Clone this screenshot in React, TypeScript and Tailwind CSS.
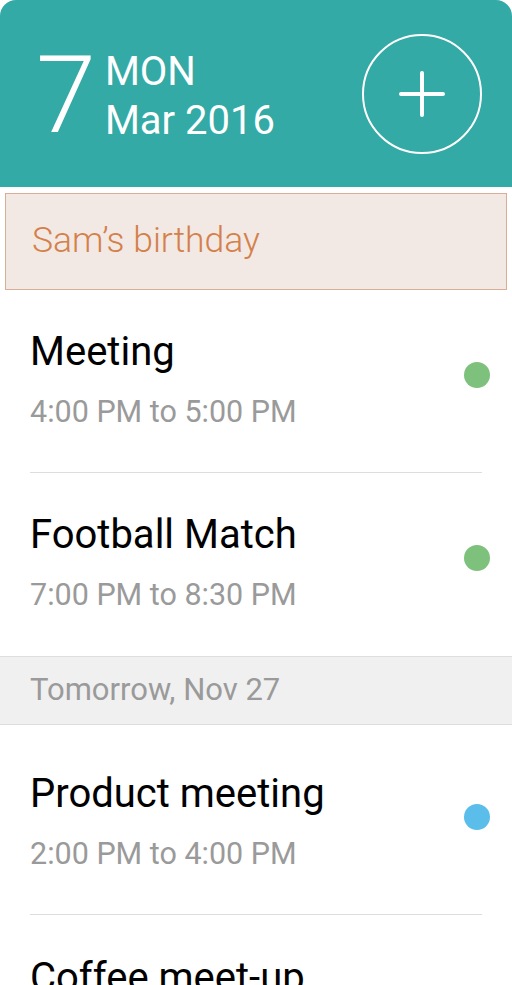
type Item = { title: string; time: string; dot: string; pt: string; pb: string }

const today: Item[] = [
    { title: 'Meeting', time: '4:00 PM to 5:00 PM', dot: 'bg-[#7dc17c]', pt: 'pt-[38px]', pb: 'pb-[42px]' },
    { title: 'Football Match', time: '7:00 PM to 8:30 PM', dot: 'bg-[#7dc17c]', pt: 'pt-[38px]', pb: 'pb-[43px]' },
]

const tomorrow: Item[] = [
    { title: 'Product meeting', time: '2:00 PM to 4:00 PM', dot: 'bg-[#5bbdea]', pt: 'pt-[45px]', pb: 'pb-[42px]' },
    { title: 'Coffee meet-up', time: '6:00 PM to 7:00 PM', dot: 'bg-[#7dc17c]', pt: 'pt-[39px]', pb: 'pb-[42px]' },
]

const EventRow = ({ title, time, dot, pt, pb, last }: Item & { last?: boolean }) => (
    <div className="px-[30px]">
        <div className={`flex items-center ${pt} ${pb} ${last ? '' : 'border-b border-[#dddddd]'}`}>
            <div className="flex-1">
                <p className="text-[40px] leading-[48px] text-black">{title}</p>
                <p className="mt-[18px] text-[30.5px] leading-[36px] text-[#9a9a9a]">{time}</p>
            </div>
            <div className={`w-[26px] h-[26px] rounded-full -mr-[8px] mb-[8px] ${dot}`} />
        </div>
    </div>
)

export default function App() {
    return (
        <div className="w-[512px] h-[985px] overflow-hidden bg-white font-['Roboto',sans-serif]">
            {/* Header */}
            <div className="h-[187px] bg-[#33aaa5] rounded-t-[16px] flex items-start pl-[36px] pr-[30px] pt-[34px] text-white">
                <span className="text-[108px] leading-[108px] font-light mt-[7px]">7</span>
                <div className="ml-[9px] mt-[13px] text-[40px] leading-[49px]">
                    <p>MON</p>
                    <p>Mar 2016</p>
                </div>
                <div className="ml-auto w-[120px] h-[120px] rounded-full border-2 border-white flex items-center justify-center">
                    <svg width="46" height="46" viewBox="0 0 46 46" fill="none" stroke="white" strokeWidth="4" strokeLinecap="round">
                        <path d="M23 2v42M2 23h42" />
                    </svg>
                </div>
            </div>

            {/* All-day event */}
            <div className="mx-[5px] mt-[6px] h-[97px] bg-[#f2e8e4] border border-[#d8ae98] flex items-center pl-[26px]">
                <p className="text-[35.5px] font-light text-[#d4804a] leading-none -mt-[2px]">Sam’s birthday</p>
            </div>

            {today.map((e, i) => (
                <EventRow key={e.title} {...e} last={i === today.length - 1} />
            ))}

            <div className="h-[69px] bg-[#f0f0f0] border-y border-[#dddddd] flex items-center px-[30px]">
                <p className="text-[31px] text-[#9a9a9a]">Tomorrow, Nov 27</p>
            </div>

            {tomorrow.map((e, i) => (
                <EventRow key={e.title} {...e} last={i === tomorrow.length - 1} />
            ))}
        </div>
    )
}
